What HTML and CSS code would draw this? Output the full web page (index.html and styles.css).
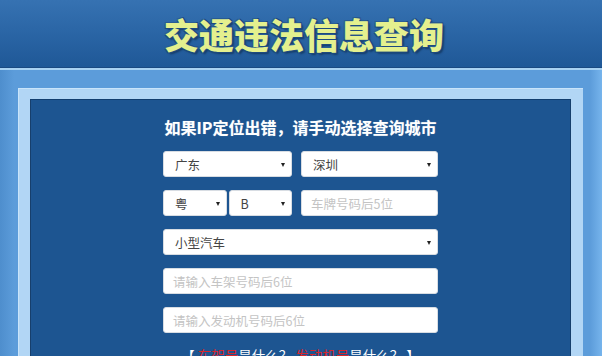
FILE: index.html
```html
<!DOCTYPE html>
<html lang="zh-CN">
<head>
<meta charset="utf-8">
<title>交通违法信息查询</title>
<link rel="stylesheet" href="styles.css">
</head>
<body>
<div class="page">
  <header class="header">
    <h1 class="title">交通违法信息查询</h1>
  </header>
  <div class="stage">
    <div class="frame">
      <div class="panel">
        <p class="subtitle">如果IP定位出错，请手动选择查询城市</p>
        <form class="form">
          <div class="row">
            <div class="sel w-left"><span class="val">广东</span></div>
            <div class="sel grow"><span class="val">深圳</span></div>
          </div>
          <div class="row">
            <div class="pair">
              <div class="sel small"><span class="val">粤</span></div>
              <div class="sel small"><span class="val">B</span></div>
            </div>
            <div class="inp grow"><span class="ph">车牌号码后5位</span></div>
          </div>
          <div class="row">
            <div class="sel grow"><span class="val">小型汽车</span></div>
          </div>
          <div class="row">
            <div class="inp grow"><span class="ph">请输入车架号码后6位</span></div>
          </div>
          <div class="row">
            <div class="inp grow"><span class="ph">请输入发动机号码后6位</span></div>
          </div>
        </form>
        <p class="help">【 <span class="red">车架号</span>是什么？ <span class="red">发动机号</span>是什么？ 】</p>
      </div>
    </div>
  </div>
</div>
</body>
</html>
```
FILE: styles.css
```css
html, body {
  margin: 0;
  padding: 0;
}
body {
  width: 602px;
  height: 356px;
  overflow: hidden;
  font-family: "Noto Sans CJK SC", "Noto Sans", sans-serif;
  background: #5d9dda;
}
.page {
  width: 602px;
  height: 356px;
  display: flex;
  flex-direction: column;
}
.header {
  flex: none;
  height: 67px;
  border-bottom: 1px solid #1a4a82;
  background: linear-gradient(to bottom, #3672b2 0%, #2a65a5 50%, #1f5897 100%);
  display: flex;
  align-items: center;
  justify-content: center;
  box-shadow: 0 2px 0 #a9d2f2;
}
.title {
  margin: 0;
  padding-left: 6px;
  font-size: 35px;
  font-weight: 900;
  letter-spacing: 0;
  color: #e4f08e;
  line-height: 1;
  text-shadow: 1px 1px 0 #1d4a7e, -1px -1px 0 #2a5d95, 1px -1px 0 #1d4a7e, -1px 1px 0 #1d4a7e, 2px 2px 2px #143a66;
}
.stage {
  flex: 1;
  min-height: 0;
  margin-top: 2px;
  padding: 18px 19px 0 18px;
  background: linear-gradient(to right, #4e8ecd 0px, #5c9cda 14px, #5c9cda 590px, #76b4ec 602px);
}
.frame {
  height: 100%;
  box-sizing: border-box;
  padding: 11px 12px 0 12px;
  background: #b2d6f5;
  box-shadow: inset 1px 1px 0 #c9e4fa;
}
.panel {
  height: 100%;
  box-sizing: border-box;
  background: #1d5591;
  border-top: 1px solid #123e6f;
  border-left: 1px solid #173f6c;
  border-right: 1px solid #173f6c;
  padding-top: 17px;
  display: flex;
  flex-direction: column;
  align-items: center;
}
.subtitle {
  margin: 0;
  color: #ffffff;
  font-size: 16px;
  font-weight: 700;
  line-height: 20px;
  text-shadow: 0 0 1px rgba(255,255,255,0.4);
}
.form {
  margin: 14px 0 0 0;
  width: 275px;
  display: flex;
  flex-direction: column;
  gap: 13px;
  flex: none;
}
.row {
  display: flex;
  gap: 9px;
  height: 26px;
}
.pair {
  width: 129px;
  display: flex;
  gap: 2px;
}
.w-left {
  width: 129px;
  flex: none;
}
.small {
  flex: 1;
}
.grow {
  flex: 1;
}
.sel, .inp {
  position: relative;
  box-sizing: border-box;
  height: 26px;
  background: #ffffff;
  border-radius: 3px;
  border: 1px solid #d8dde3;
  display: flex;
  align-items: center;
  font-size: 12.5px;
}
.sel {
  padding-left: 11px;
}
.inp {
  padding-left: 9px;
}
.sel::after {
  content: "";
  position: absolute;
  right: 6px;
  top: 11px;
  border-left: 2.5px solid transparent;
  border-right: 2.5px solid transparent;
  border-top: 4px solid #222;
}
.val {
  color: #444;
}
.ph {
  color: #c4c4c4;
}
.help {
  flex: none;
  margin: 12px 0 0 0;
  font-size: 13.5px;
  line-height: 20px;
  color: #ffffff;
  white-space: pre;
}
.red {
  color: #d8262c;
}
```
